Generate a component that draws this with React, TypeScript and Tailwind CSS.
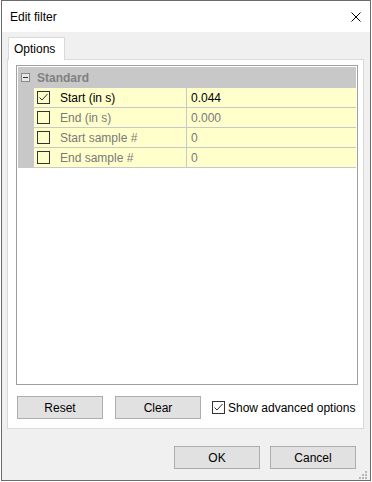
import React from "react";

function Check({ checked }: { checked: boolean }) {
  return (
    <div className="w-[13px] h-[13px] border border-[#333333] flex items-center justify-center shrink-0">
      {checked && (
        <svg width="11" height="11" viewBox="0 0 11 11">
          <path d="M1.5 5.5 L4 8 L9.5 2" stroke="#333333" strokeWidth="1" fill="none" />
        </svg>
      )}
    </div>
  );
}

const rows = [
  { name: "Start (in s)", value: "0.044", on: true },
  { name: "End (in s)", value: "0.000", on: false },
  { name: "Start sample #", value: "0", on: false },
  { name: "End sample #", value: "0", on: false },
];

function Btn({ label, cls }: { label: string; cls?: string }) {
  return (
    <div
      className={
        "w-[86px] h-[23px] border border-[#adadad] bg-[#e1e1e1] flex items-center justify-center text-black " +
        (cls ?? "")
      }
    >
      {label}
    </div>
  );
}

export default function App() {
  return (
    <div className="w-[372px] h-[482px] bg-white font-['Liberation_Sans',Arial,sans-serif] text-[12px] text-black leading-none">
      <div className="relative ml-[1px] w-[370px] h-[481px] border border-[#6b6b6b] bg-[#f0f0f0] flex flex-col">
        {/* Title bar */}
        <div className="h-[31px] bg-white flex items-center justify-between pl-[8px] pr-[9px] shrink-0">
          <span>Edit filter</span>
          <svg width="10" height="10" viewBox="0 0 10 10">
            <path d="M0.5 0.5 L9.5 9.5 M9.5 0.5 L0.5 9.5" stroke="#000" strokeWidth="1" fill="none" />
          </svg>
        </div>

        {/* Body */}
        <div className="pl-[5px] pt-[5px]">
          <div className="relative z-10 ml-[1px] -mb-px h-[23px] w-[57px] border border-b-0 border-[#d9d9d9] bg-white flex items-center pl-[5px]">
            Options
          </div>
          <div className="w-[357px] h-[370px] border border-[#d9d9d9] bg-white pt-[5px] pl-[8px]">
            {/* Property grid */}
            <div className="w-[342px] h-[320px] border border-[#a0a0a0] p-[1px] bg-white">
              <div className="h-[21px] bg-[#c8c8c8] flex items-center">
                <div className="ml-[3px] w-[9px] h-[9px] border border-[#8a8a8a] bg-[#e8e8e8] flex items-center justify-center">
                  <div className="w-[5px] h-[1px] bg-[#333333]" />
                </div>
                <span className="ml-[7px] font-bold text-[#808080]">Standard</span>
              </div>
              {rows.map((r) => (
                <div key={r.name} className="flex h-[20px]">
                  <div className="w-[16px] bg-[#c8c8c8]" />
                  <div className="flex-1 flex bg-[#ffffcc] border-b border-[#c8c8c8]">
                    <div className="w-[153px] border-r border-[#c8c8c8] flex items-center">
                      <div className="ml-[3px]">
                        <Check checked={r.on} />
                      </div>
                      <span className={"ml-[10px] " + (r.on ? "text-black" : "text-[#7a7a7a]")}>{r.name}</span>
                    </div>
                    <div className={"flex items-center pl-[4px] " + (r.on ? "text-black" : "text-[#7a7a7a]")}>
                      {r.value}
                    </div>
                  </div>
                </div>
              ))}
            </div>

            {/* Buttons inside panel */}
            <div className="mt-[11px] flex items-center">
              <Btn label="Reset" cls="ml-[1px]" />
              <Btn label="Clear" cls="ml-[12px]" />
              <div className="ml-[11px]">
                <Check checked={true} />
              </div>
              <span className="ml-[3px]">Show advanced options</span>
            </div>
          </div>
        </div>

        {/* Dialog buttons */}
        <div className="mt-[17px] flex justify-end gap-[10px] pr-[14px]">
          <Btn label="OK" />
          <Btn label="Cancel" />
        </div>

        {/* Resize grip */}
        <svg className="absolute right-[2px] bottom-[0px]" width="10" height="9" viewBox="0 0 10 9">
          <rect x="7" y="0" width="2" height="2" fill="#b8b8b8" />
          <rect x="4" y="3" width="2" height="2" fill="#b8b8b8" />
          <rect x="7" y="3" width="2" height="2" fill="#b8b8b8" />
          <rect x="1" y="6" width="2" height="2" fill="#b8b8b8" />
          <rect x="4" y="6" width="2" height="2" fill="#b8b8b8" />
          <rect x="7" y="6" width="2" height="2" fill="#b8b8b8" />
        </svg>
      </div>
    </div>
  );
}
